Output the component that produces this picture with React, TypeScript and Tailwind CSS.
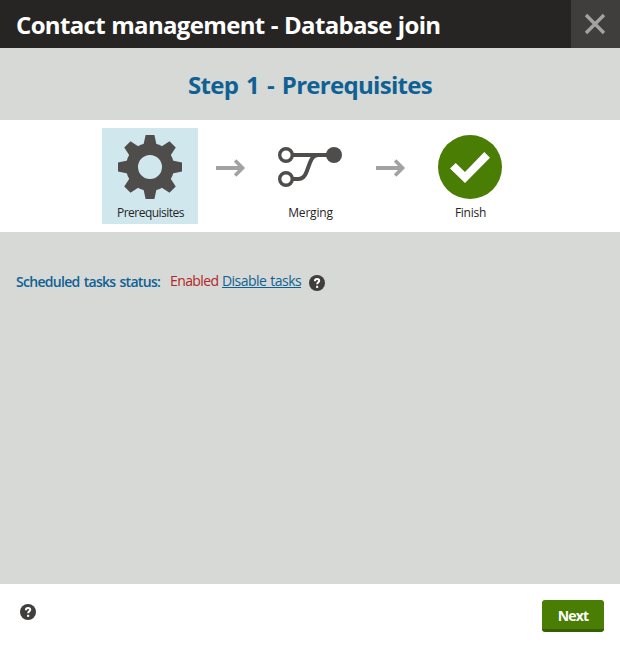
import type { ReactNode } from "react";

function HelpIcon() {
  return (
    <svg className="block size-4" viewBox="0 0 16 16">
      <circle cx="8" cy="8" r="8" fill="#403e3d" />
      <path d="M5.900 6.200C5.900 4.700 6.800 4 8.100 4s2.100.7 2.100 1.800c0 1.500-2 1.500-2 3.400" fill="none" stroke="#fff" strokeWidth="2" />
      <rect x="7.100" y="10.800" width="2.100" height="2.100" fill="#fff" />
    </svg>
  );
}

const teeth = [0, 45, 90, 135, 180, 225, 270, 315];

function GearIcon() {
  return (
    <svg className="block size-16" viewBox="-32 -32 64 64">
      {teeth.map((a) => (
        <path key={a} d="M-7-20-4.400-32H4.400L7-20z" transform={`rotate(${a})`} fill="#4f4d4b" />
      ))}
      <circle r="18" fill="none" stroke="#4f4d4b" strokeWidth="12" />
    </svg>
  );
}

function MergeIcon() {
  return (
    <svg className="block size-16" viewBox="0 0 64 64" fill="none" stroke="#4f4d4b">
      <path d="M15 20h36M15 44h5.500c4.500 0 6.500-3 8-7l3.500-9.500c1.500-4 3.500-7.500 8-7.500" strokeWidth="4" />
      <circle cx="8" cy="20" r="6.300" strokeWidth="3.400" />
      <circle cx="8" cy="44" r="6.300" strokeWidth="3.400" />
      <circle cx="56" cy="20" r="8" fill="#4f4d4b" stroke="none" />
    </svg>
  );
}

function FinishIcon() {
  return (
    <svg className="block size-16" viewBox="0 0 64 64">
      <circle cx="32" cy="32" r="32" fill="#497d04" />
      <path d="M12 33.500l5.700-5.600 9.300 9.200 19.300-20 5.700 5.600L27 48.100z" fill="#fff" />
    </svg>
  );
}

function Arrow() {
  return (
    <svg className="mt-[30px] block h-5 w-16" viewBox="0 0 64 20" fill="none" stroke="#a3a2a2" strokeWidth="4">
      <path d="M18 10h26" />
      <path d="M37.100 2.600L44.500 10l-7.400 7.400" strokeWidth="3.600" />
    </svg>
  );
}

function Step({ label, active, children }: { label: ReactNode; active?: boolean; children: ReactNode }) {
  return (
    <div className={`flex h-24 w-24 flex-col items-center pt-[7px] ${active ? "bg-[#d1e7ee]" : ""}`}>
      {children}
      <div className="mt-[6px] pl-px text-[12px] leading-4 whitespace-nowrap text-[#262524]">{label}</div>
    </div>
  );
}

export default function App() {
  return (
    <div className="flex h-[648px] w-[620px] flex-col overflow-hidden bg-[#d6d9d6] font-['Open_Sans','Noto_Sans',sans-serif]">
      <header className="flex h-12 shrink-0 justify-between bg-[#262524]">
        <h1 className="pt-px pl-4 text-[24px] leading-[48px] font-bold tracking-[-0.66px] [word-spacing:0.6px] whitespace-nowrap text-white">
          Contact management - Database join
        </h1>
        <button className="flex w-[49px] items-center justify-center bg-[#403e3d] pr-px" aria-label="Close">
          <svg className="block size-6" viewBox="0 0 24 24" stroke="#a3a2a2" strokeWidth="3.400">
            <path d="M3 3l18 18M21 3L3 21" />
          </svg>
        </button>
      </header>
      <h2 className="h-[72px] shrink-0 pt-px text-center text-[24px] leading-[72px] font-bold tracking-[-0.7px] [word-spacing:2.3px] text-[#0f6194]">
        Step 1 - Prerequisites
      </h2>
      <div className="flex h-28 shrink-0 bg-white pt-2 pl-[102px]">
        <Step label={<span className="tracking-[-0.52px]">Prerequisites</span>} active>
          <GearIcon />
        </Step>
        <Arrow />
        <Step label={<span className="tracking-[-0.2px]">Merging</span>}>
          <MergeIcon />
        </Step>
        <Arrow />
        <Step label={<span className="tracking-[-0.25px]">Finish</span>}>
          <FinishIcon />
        </Step>
      </div>
      <main className="flex flex-1 items-start px-4 pt-10 text-[14px] leading-5">
        <span className="w-[154px] font-semibold tracking-[-0.7px] [word-spacing:1.1px] whitespace-nowrap text-[#0f6194]">
          Scheduled tasks status:
        </span>
        <span className="-mt-px w-[52px] tracking-[-0.6px] whitespace-nowrap text-[#b12628]">Enabled</span>
        <span className="-mt-px w-[87px] whitespace-nowrap">
          <a className="tracking-[-0.55px] text-[#0f6194] underline [word-spacing:1px]">Disable tasks</a>
        </span>
        <span className="mt-[3px]">
          <HelpIcon />
        </span>
      </main>
      <footer className="flex h-16 shrink-0 items-start justify-between bg-white pt-4 pr-4 pl-5">
        <span className="mt-1">
          <HelpIcon />
        </span>
        <button className="h-8 w-[62px] rounded-[3px] border-b-[3px] border-[#346000] bg-[#497d04] pt-px text-[14px] font-bold tracking-[-0.8px] text-white">
          Next
        </button>
      </footer>
    </div>
  );
}
